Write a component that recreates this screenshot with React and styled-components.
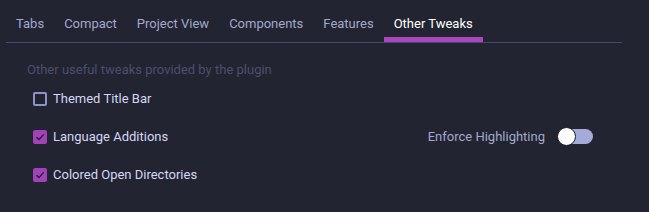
import styled, { createGlobalStyle } from "styled-components";

const Global = createGlobalStyle`
    html, body {
        margin: 0;
        background: #222431;
    }
    body {
        font-family: Roboto, "Noto Sans", sans-serif;
    }
`;

const Page = styled.div`
    width: 649px;
    height: 212px;
    background: #222431;
    padding-top: 4px;
    box-sizing: border-box;
`;

const TabBar = styled.div`
    display: flex;
    margin: 0 27px 0 6px;
    border-bottom: 1px solid #474a6e;
    height: 38px;
`;

const Tab = styled.div`
    padding: 1px 10px 0;
    display: flex;
    align-items: center;
    font-size: 13px;
    color: ${(props) => (props.active ? "#ffffff" : "#a4a8cc")};
    box-shadow: ${(props) => (props.active ? "inset 0 -5px 0 #ab47bc" : "none")};
    cursor: pointer;
`;

const Body = styled.div`
    padding: 19px 56px 0 27px;
`;

const Hint = styled.div`
    font-size: 13px;
    color: #4b4f6c;
    line-height: 16px;
    margin-bottom: 11px;
`;

const Row = styled.div`
    display: flex;
    align-items: center;
    justify-content: space-between;
    height: 19px;
    line-height: 19px;
    margin-bottom: 19px;
    padding-left: 6px;
`;

const Check = styled.label`
    display: flex;
    align-items: center;
    gap: 6px;
    font-size: 13px;
    color: #d4d7f5;
    cursor: pointer;
`;

const Box = styled.span`
    width: 14px;
    height: 14px;
    box-sizing: border-box;
    border-radius: 2px;
    border: ${(props) => (props.checked ? "none" : "2px solid #8e93cb")};
    background: ${(props) => (props.checked ? "#a142b8" : "transparent")};
    display: flex;
    align-items: center;
    justify-content: center;
`;

const Setting = styled.div`
    display: flex;
    align-items: center;
    gap: 13px;
    font-size: 13px;
    color: #a4a8cc;
`;

const Track = styled.span`
    position: relative;
    width: 35px;
    height: 15px;
    border-radius: 8px;
    background: #a6aad6;
`;

const Knob = styled.span`
    position: absolute;
    left: -1px;
    top: -2px;
    width: 19px;
    height: 19px;
    border-radius: 50%;
    background: #ffffff;
    box-sizing: border-box;
    border: 1px solid #1a1b25;
`;

const tabs = ["Tabs", "Compact", "Project View", "Components", "Features", "Other Tweaks"];

const Checkbox = ({ checked, children }) => (
    <Check>
        <Box checked={checked}>
            {checked && (
                <svg width="10" height="10" viewBox="0 0 10 10">
                    <path d="M1.5 5.2 L4 7.6 L8.6 2.4" fill="none" stroke="#1e1f2a" strokeWidth="1.4" />
                </svg>
            )}
        </Box>
        {children}
    </Check>
);

const App = () => {
    return (
        <Page>
            <Global />
            <TabBar>
                {tabs.map((t) => (
                    <Tab key={t} active={t === "Other Tweaks"}>
                        {t}
                    </Tab>
                ))}
            </TabBar>
            <Body>
                <Hint>Other useful tweaks provided by the plugin</Hint>
                <Row>
                    <Checkbox>Themed Title Bar</Checkbox>
                </Row>
                <Row>
                    <Checkbox checked>Language Additions</Checkbox>
                    <Setting>
                        Enforce Highlighting
                        <Track>
                            <Knob />
                        </Track>
                    </Setting>
                </Row>
                <Row>
                    <Checkbox checked>Colored Open Directories</Checkbox>
                </Row>
            </Body>
        </Page>
    );
};

export default App;
